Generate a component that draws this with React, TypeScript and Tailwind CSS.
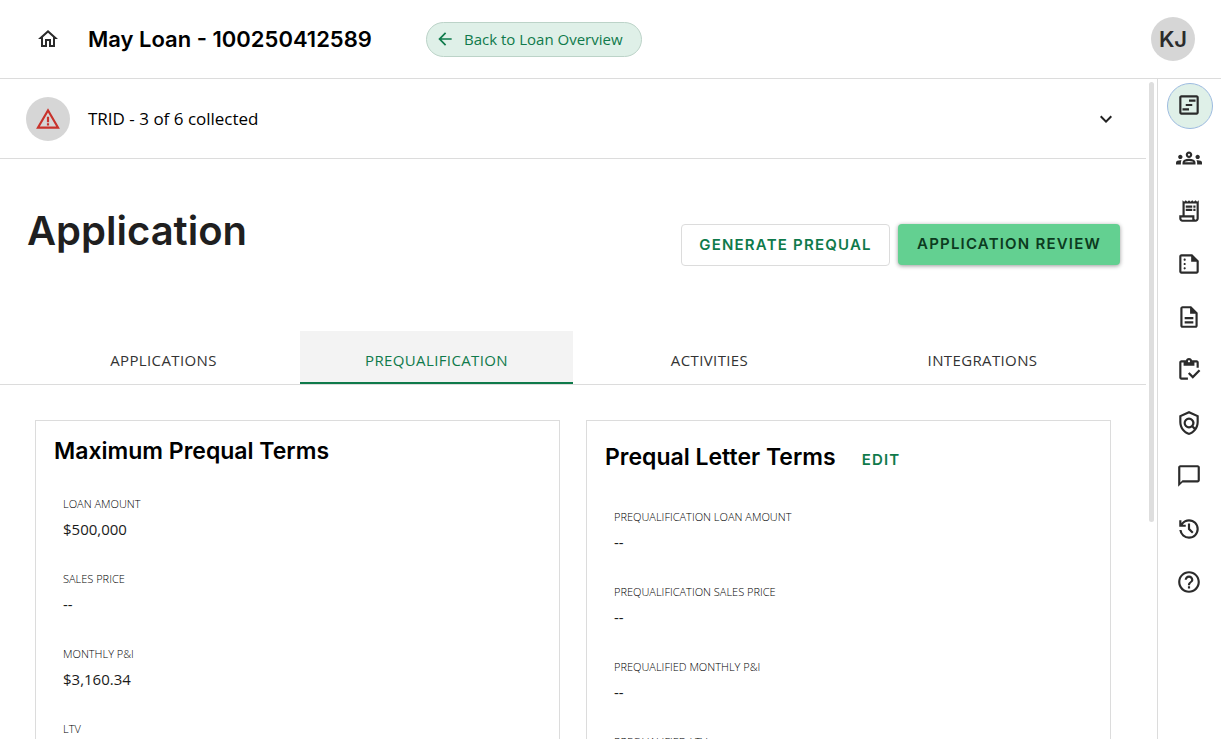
import { useState } from 'react';
import type { ComponentType } from 'react';
import {
  MdArrowBack,
  MdChatBubbleOutline,
  MdExpandMore,
  MdHelpOutline,
  MdOutlineDescription,
  MdOutlineGroups,
  MdOutlineHome,
  MdOutlineInventory,
  MdOutlinePolicy,
  MdOutlineReceiptLong,
  MdOutlineSummarize,
  MdOutlineViewTimeline,
  MdWarningAmber,
} from 'react-icons/md';
import clsx from 'clsx';

interface Term {
  label: string;
  value: string;
}

function HistoryIcon({ className }: { className?: string }) {
  return (
    <svg viewBox="0 0 24 24" fill="currentColor" aria-hidden="true" className={className}>
      <path d="M12 21q-3.45 0-6.012-2.287Q3.425 16.425 3.05 13H5.1q.35 2.6 2.313 4.3T12 19q2.925 0 4.963-2.037T19 12 16.963 7.038 12 5q-1.725 0-3.225.8T6.25 8H9v2H3V4h2v2.35q1.275-1.6 3.113-2.475T12 3q1.875 0 3.513.713t2.85 1.924 1.925 2.85T21 12t-.712 3.513-1.925 2.85-2.85 1.925T12 21m2.8-4.8L11 12.4V7h2v4.6l3.2 3.2z" />
    </svg>
  );
}

const NAV_ITEMS: { label: string; icon: ComponentType<{ className?: string }> }[] = [
  { label: 'Application', icon: MdOutlineViewTimeline },
  { label: 'Contacts', icon: MdOutlineGroups },
  { label: 'Fees', icon: MdOutlineReceiptLong },
  { label: 'Summary', icon: MdOutlineSummarize },
  { label: 'Documents', icon: MdOutlineDescription },
  { label: 'Tasks', icon: MdOutlineInventory },
  { label: 'Compliance', icon: MdOutlinePolicy },
  { label: 'Messages', icon: MdChatBubbleOutline },
  { label: 'History', icon: HistoryIcon },
  { label: 'Help', icon: MdHelpOutline },
];

const TABS = ['Applications', 'Prequalification', 'Activities', 'Integrations'];

const MAX_TERMS: Term[] = [
  { label: 'Loan Amount', value: '$500,000' },
  { label: 'Sales Price', value: '--' },
  { label: 'Monthly P&I', value: '$3,160.34' },
  { label: 'LTV', value: '--' },
];

const LETTER_TERMS: Term[] = [
  { label: 'Prequalification Loan Amount', value: '--' },
  { label: 'Prequalification Sales Price', value: '--' },
  { label: 'Prequalified Monthly P&I', value: '--' },
  { label: 'Prequalified LTV', value: '--' },
];

function Header() {
  return (
    <header className="flex h-[79px] shrink-0 items-center border-b border-[#dcdcdc] pr-[26px] pl-9">
      <a href="#home" aria-label="Home" className="text-[#2b2b2b]">
        <MdOutlineHome className="size-6" />
      </a>
      <h1 className="ml-7 w-[338px] font-[Inter,sans-serif] text-[22px] leading-8 font-semibold whitespace-nowrap text-black">
        May Loan - 100250412589
      </h1>
      <a
        href="#overview"
        className="flex h-[35px] items-center gap-[9px] rounded-full border border-[#bcd3c8] bg-[#dff0e8] pr-[18px] pl-2 text-[15px] whitespace-nowrap text-[#0f7a4b]"
      >
        <MdArrowBack className="size-5" />
        Back to Loan Overview
      </a>
      <button
        type="button"
        className="ml-auto size-11 rounded-full bg-[#d6d6d6] font-[Inter,sans-serif] text-[22px] font-semibold text-[#2b2b2b]"
      >
        KJ
      </button>
    </header>
  );
}

function TridBanner() {
  return (
    <button
      type="button"
      className="flex h-20 w-full items-center border-b border-[#dcdcdc] pr-7 pl-[26px] text-left"
    >
      <span className="flex size-11 items-center justify-center rounded-full bg-[#d6d6d6] text-[#c8322b]">
        <MdWarningAmber className="size-[26px]" />
      </span>
      <span className="ml-[18px] text-[17px] text-black">TRID - 3 of 6 collected</span>
      <MdExpandMore className="ml-auto size-6 text-[#222]" />
    </button>
  );
}

function TermList({ terms }: { terms: Term[] }) {
  return (
    <dl className="ml-[9px]">
      {terms.map((term) => (
        <div key={term.label} className="h-[75px]">
          <dt className="text-[11px] leading-4 font-light text-black uppercase">{term.label}</dt>
          <dd className="mt-[3px] text-[15px] leading-7 text-[#1b1b1b]">{term.value}</dd>
        </div>
      ))}
    </dl>
  );
}

function Sidebar() {
  const [active, setActive] = useState('Application');

  return (
    <nav className="flex w-16 shrink-0 flex-col items-center gap-[7px] border-l border-[#dcdcdc] pt-1">
      {NAV_ITEMS.map(({ label, icon: Icon }) => (
        <button
          key={label}
          type="button"
          aria-label={label}
          onClick={() => setActive(label)}
          className={clsx(
            'flex size-[46px] shrink-0 items-center justify-center rounded-full border pr-[2px] pb-[2px] text-[#2b2b2b]',
            active === label ? 'border-[#9dbbe0] bg-[#dff0e8]' : 'border-transparent',
          )}
        >
          <Icon className="size-[26px] shrink-0" />
        </button>
      ))}
    </nav>
  );
}

export default function App() {
  const [tab, setTab] = useState('Prequalification');

  return (
    <div className="flex h-screen flex-col overflow-hidden bg-white font-['Open_Sans','Noto_Sans',sans-serif]">
      <Header />
      <div className="flex min-h-0 flex-1">
        <main className="min-w-0 flex-1 overflow-hidden">
          <TridBanner />

          <div className="flex items-start justify-between pt-[46px] pr-[26px] pl-[27px]">
            <h2 className="font-[Inter,sans-serif] text-[40px] leading-[52px] font-semibold text-[#1f1f1f]">
              Application
            </h2>
            <div className="mt-[19px] flex gap-2 font-[Inter,sans-serif] text-[15px] font-semibold tracking-[0.08em] whitespace-nowrap">
              <button
                type="button"
                className="h-[42px] w-[209px] rounded border border-[#dcdcdc] text-[#0f7a4b]"
              >
                GENERATE PREQUAL
              </button>
              <button
                type="button"
                className="h-[41px] w-[222px] rounded bg-[#63d091] text-[#0c3b20] shadow-[0_1px_4px_rgba(0,0,0,0.4)]"
              >
                APPLICATION REVIEW
              </button>
            </div>
          </div>

          <div role="tablist" className="mt-[65px] grid grid-cols-4 border-b border-[#dcdcdc] px-[27px]">
            {TABS.map((name) => (
              <button
                key={name}
                type="button"
                role="tab"
                aria-selected={tab === name}
                onClick={() => setTab(name)}
                className={clsx(
                  'h-[53px] border-b-2 pt-2 text-[15px] font-medium tracking-wide uppercase',
                  tab === name
                    ? 'border-[#0f7a4b] bg-[#f3f3f3] text-[#0f7a4b]'
                    : 'border-transparent text-[#333]',
                )}
              >
                {name}
              </button>
            ))}
          </div>

          <div className="grid grid-cols-2 gap-[26px] px-[35px] pt-[35px]">
            <section className="border border-[#dcdcdc] px-[18px] pt-[14px]">
              <h3 className="mb-[29px] font-[Inter,sans-serif] text-[23px] leading-8 font-semibold text-black">
                Maximum Prequal Terms
              </h3>
              <TermList terms={MAX_TERMS} />
            </section>
            <section className="border border-[#dcdcdc] px-[18px] pt-5">
              <div className="mb-9 flex items-baseline gap-[26px]">
                <h3 className="font-[Inter,sans-serif] text-[23px] leading-8 font-semibold text-black">
                  Prequal Letter Terms
                </h3>
                <button
                  type="button"
                  className="font-[Inter,sans-serif] text-[15px] font-semibold tracking-[0.08em] text-[#0f7a4b]"
                >
                  EDIT
                </button>
              </div>
              <TermList terms={LETTER_TERMS} />
            </section>
          </div>
        </main>

        {/* scroll track beside the page content */}
        <div className="w-[11px] shrink-0 px-[3px] pt-[3px]">
          <div className="h-[67%] w-[5px] rounded-full bg-[#dedede]" />
        </div>
        <Sidebar />
      </div>
    </div>
  );
}
